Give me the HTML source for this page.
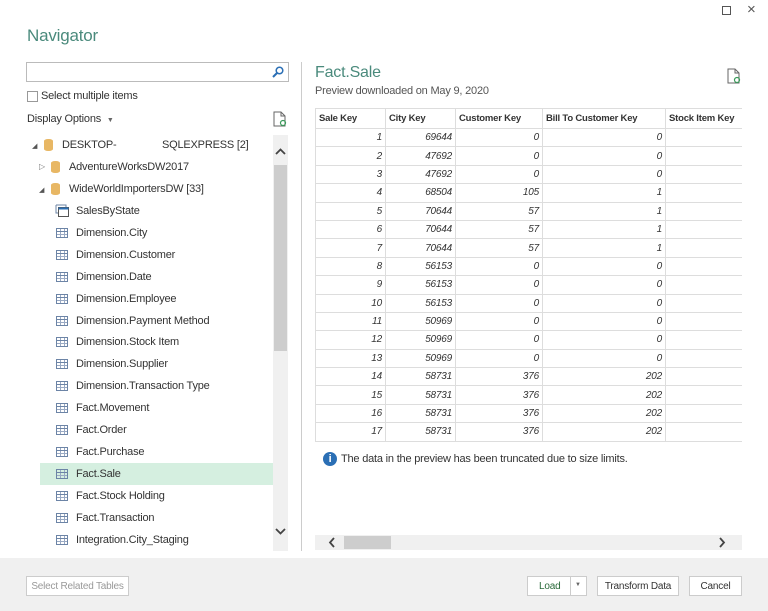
<!DOCTYPE html>
<html><head><meta charset="utf-8"><style>
*{box-sizing:border-box;margin:0;padding:0}
body{width:768px;height:611px;background:#fff;font-family:"Liberation Sans",sans-serif;position:relative;overflow:hidden;color:#333;letter-spacing:-0.2px}
.a{position:absolute;white-space:nowrap}
.row{position:absolute;left:40px;width:233px;height:22px;font-size:11px;line-height:22px;color:#333}
.row .ic{position:absolute;left:16px;top:6px;width:12px;height:10px;border:1px solid #6c84a6;background:
linear-gradient(#6c84a6,#6c84a6) 0 2px/100% 1px no-repeat,
linear-gradient(#9aaac4,#9aaac4) 0 5px/100% 1px no-repeat,
linear-gradient(90deg,transparent 3px,#9aaac4 3px,#9aaac4 4px,transparent 4px,transparent 7px,#9aaac4 7px,#9aaac4 8px,transparent 8px);}
.row span{position:absolute;left:36px}
.db{position:absolute;width:9px;height:12px;background:#e8b764;border-radius:4px/2px}
td{border:1px solid #ddd;font-size:10px;font-style:italic;text-align:right;padding-right:3px;height:18.4px;line-height:17px;color:#333}
th{border:1px solid #ddd;font-size:9.5px;text-align:left;padding-left:3px;height:20px;font-weight:bold;color:#333}
.btn{position:absolute;top:576px;height:20px;border:1px solid #ccc;background:#fff;font-size:10px;line-height:20px;text-align:center;color:#333}
</style></head><body>
<div class="a" style="left:722px;top:6px;width:9px;height:9px;border:1px solid #555"></div>
<div class="a" style="left:747px;top:1px;font-size:15px;color:#555">×</div>
<div class="a" style="left:27px;top:26px;font-size:17px;color:#4a8a7c">Navigator</div>

<div class="a" style="left:26px;top:62px;width:263px;height:20px;border:1px solid #bbb"></div>
<svg class="a" style="left:272px;top:66px" width="12" height="12"><circle cx="7.5" cy="4.5" r="3.3" fill="none" stroke="#2b6fb5" stroke-width="1.5"/><line x1="5" y1="7" x2="1" y2="11" stroke="#2b6fb5" stroke-width="2"/></svg>
<div class="a" style="left:27px;top:91px;width:11px;height:11px;border:1px solid #999"></div>
<div class="a" style="left:41px;top:90px;font-size:11px">Select multiple items</div>
<div class="a" style="left:27px;top:113px;font-size:11px">Display Options <span style="font-size:7px;color:#666;margin-left:3px">▼</span></div>
<svg class="a" style="left:273px;top:111px" width="14" height="16"><path d="M1 1h7l4 4v10H1z" fill="#fff" stroke="#666"/><path d="M8 1v4h4" fill="none" stroke="#666"/><circle cx="10" cy="12" r="2.5" fill="none" stroke="#3a9a5a" stroke-width="1.2"/></svg>

<div class="a" style="left:32px;top:142px;font-size:7px;color:#555">◢</div>
<div class="db" style="left:44px;top:139px"></div>
<div class="a" style="left:62px;top:139px;font-size:11px">DESKTOP-</div>
<div class="a" style="left:162px;top:139px;font-size:11px">SQLEXPRESS [2]</div>
<div class="a" style="left:39px;top:162px;font-size:8px;color:#777">▷</div>
<div class="db" style="left:51px;top:161px"></div>
<div class="a" style="left:69px;top:161px;font-size:11px">AdventureWorksDW2017</div>
<div class="a" style="left:39px;top:186px;font-size:7px;color:#555">◢</div>
<div class="db" style="left:51px;top:183px"></div>
<div class="a" style="left:69px;top:183px;font-size:11px">WideWorldImportersDW [33]</div>

<div class="row" style="top:200px"><svg class="a" style="left:15px;top:4px" width="14" height="13"><path d="M1 1h10v2M1 1v8h2" fill="none" stroke="#6c84a6"/><rect x="3.5" y="3.5" width="10" height="9" fill="#fff" stroke="#555"/><rect x="3.5" y="3.5" width="10" height="2" fill="#2b6fb5"/></svg><span>SalesByState</span></div>
<div class="row" style="top:222px"><i class="ic"></i><span>Dimension.City</span></div>
<div class="row" style="top:244px"><i class="ic"></i><span>Dimension.Customer</span></div>
<div class="row" style="top:266px"><i class="ic"></i><span>Dimension.Date</span></div>
<div class="row" style="top:288px"><i class="ic"></i><span>Dimension.Employee</span></div>
<div class="row" style="top:310px"><i class="ic"></i><span>Dimension.Payment Method</span></div>
<div class="row" style="top:331px"><i class="ic"></i><span>Dimension.Stock Item</span></div>
<div class="row" style="top:353px"><i class="ic"></i><span>Dimension.Supplier</span></div>
<div class="row" style="top:375px"><i class="ic"></i><span>Dimension.Transaction Type</span></div>
<div class="row" style="top:397px"><i class="ic"></i><span>Fact.Movement</span></div>
<div class="row" style="top:419px"><i class="ic"></i><span>Fact.Order</span></div>
<div class="row" style="top:441px"><i class="ic"></i><span>Fact.Purchase</span></div>
<div class="row" style="top:463px;background:#d5efe0"><i class="ic"></i><span>Fact.Sale</span></div>
<div class="row" style="top:485px"><i class="ic"></i><span>Fact.Stock Holding</span></div>
<div class="row" style="top:507px"><i class="ic"></i><span>Fact.Transaction</span></div>
<div class="row" style="top:529px"><i class="ic"></i><span>Integration.City_Staging</span></div>

<div class="a" style="left:273px;top:135px;width:15px;height:416px;background:#f0f0f0"></div>
<div class="a" style="left:274px;top:165px;width:13px;height:186px;background:#cdcdcd"></div>
<svg class="a" style="left:275px;top:148px" width="11" height="8"><path d="M1 6l4.5-4.5L10 6" fill="none" stroke="#444" stroke-width="1.8"/></svg>
<svg class="a" style="left:275px;top:527px" width="11" height="8"><path d="M1 2l4.5 4.5L10 2" fill="none" stroke="#444" stroke-width="1.8"/></svg>

<div class="a" style="left:301px;top:62px;width:1px;height:489px;background:#ccc"></div>

<div class="a" style="left:315px;top:64px;font-size:16px;color:#4a8a7c">Fact.Sale</div>
<div class="a" style="left:315px;top:85px;font-size:11px;color:#555">Preview downloaded on May 9, 2020</div>
<svg class="a" style="left:727px;top:68px" width="14" height="16"><path d="M1 1h7l4 4v10H1z" fill="#fff" stroke="#666"/><path d="M8 1v4h4" fill="none" stroke="#666"/><circle cx="10" cy="12" r="2.5" fill="none" stroke="#3a9a5a" stroke-width="1.2"/></svg>

<div class="a" style="left:315px;top:108px;width:427px;overflow:hidden">
<table style="border-collapse:collapse;width:440px;table-layout:fixed">
<colgroup><col style="width:70px"><col style="width:70px"><col style="width:87px"><col style="width:123px"><col style="width:90px"></colgroup>
<tr><th>Sale Key</th><th>City Key</th><th>Customer Key</th><th>Bill To Customer Key</th><th>Stock Item Key</th></tr>
<tr><td>1</td><td>69644</td><td>0</td><td>0</td><td></td></tr>
<tr><td>2</td><td>47692</td><td>0</td><td>0</td><td></td></tr>
<tr><td>3</td><td>47692</td><td>0</td><td>0</td><td></td></tr>
<tr><td>4</td><td>68504</td><td>105</td><td>1</td><td></td></tr>
<tr><td>5</td><td>70644</td><td>57</td><td>1</td><td></td></tr>
<tr><td>6</td><td>70644</td><td>57</td><td>1</td><td></td></tr>
<tr><td>7</td><td>70644</td><td>57</td><td>1</td><td></td></tr>
<tr><td>8</td><td>56153</td><td>0</td><td>0</td><td></td></tr>
<tr><td>9</td><td>56153</td><td>0</td><td>0</td><td></td></tr>
<tr><td>10</td><td>56153</td><td>0</td><td>0</td><td></td></tr>
<tr><td>11</td><td>50969</td><td>0</td><td>0</td><td></td></tr>
<tr><td>12</td><td>50969</td><td>0</td><td>0</td><td></td></tr>
<tr><td>13</td><td>50969</td><td>0</td><td>0</td><td></td></tr>
<tr><td>14</td><td>58731</td><td>376</td><td>202</td><td></td></tr>
<tr><td>15</td><td>58731</td><td>376</td><td>202</td><td></td></tr>
<tr><td>16</td><td>58731</td><td>376</td><td>202</td><td></td></tr>
<tr><td>17</td><td>58731</td><td>376</td><td>202</td><td></td></tr>
</table></div>

<div class="a" style="left:323px;top:452px;width:14px;height:14px;border-radius:50%;background:#2b6fb5;color:#fff;font-size:11px;font-weight:bold;text-align:center;line-height:14px">i</div>
<div class="a" style="left:341px;top:453px;font-size:11px;color:#333">The data in the preview has been truncated due to size limits.</div>

<div class="a" style="left:315px;top:535px;width:427px;height:15px;background:#f0f0f0"></div>
<div class="a" style="left:344px;top:536px;width:47px;height:13px;background:#cdcdcd"></div>
<svg class="a" style="left:328px;top:537px" width="8" height="11"><path d="M6 1L2 5.5 6 10" fill="none" stroke="#444" stroke-width="1.8"/></svg>
<svg class="a" style="left:718px;top:537px" width="8" height="11"><path d="M2 1l4 4.5L2 10" fill="none" stroke="#444" stroke-width="1.8"/></svg>

<div class="a" style="left:0;top:558px;width:768px;height:53px;background:#f0f0f0"></div>
<div class="btn" style="left:26px;width:103px;color:#999">Select Related Tables</div>
<div class="btn" style="left:527px;width:60px;text-align:left;padding-left:11px;color:#2a6a3a">Load</div>
<div class="a" style="left:570px;top:577px;width:1px;height:18px;background:#ccc"></div>
<div class="a" style="left:575px;top:582px;font-size:6px;color:#666">▼</div>
<div class="btn" style="left:597px;width:82px">Transform Data</div>
<div class="btn" style="left:689px;width:53px">Cancel</div>
</body></html>
